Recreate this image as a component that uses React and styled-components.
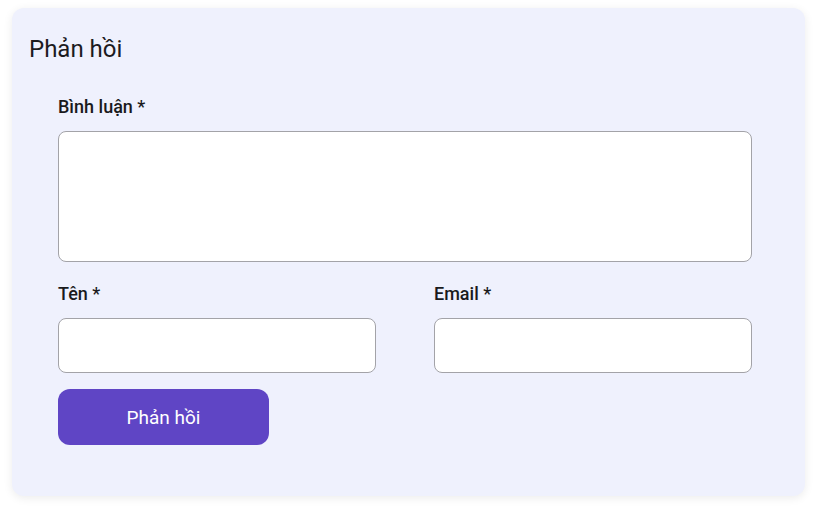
import React from "react";
import styled, { createGlobalStyle } from "styled-components";

const Global = createGlobalStyle`
  html, body { margin: 0; padding: 0; background: #ffffff; }
  body { font-family: Roboto, "Noto Sans", sans-serif; }
  * { box-sizing: border-box; }
`;

const Page = styled.div`
  padding: 8px 12px 16px 12px;
`;

const Card = styled.section`
  width: 793px;
  background: #eff1fd;
  border-radius: 12px;
  box-shadow: 0 2px 10px rgba(0, 0, 0, 0.08);
  padding: 26px 53px 51px 17px;
`;

const Title = styled.h2`
  margin: 0 0 32px 0;
  font-size: 24px;
  font-weight: 400;
  line-height: 30px;
  color: #1c1b1f;
`;

const Form = styled.form`
  margin-left: 29px;
  display: flex;
  flex-direction: column;
`;

const Row = styled.div`
  display: grid;
  grid-template-columns: 1fr 1fr;
  column-gap: 58px;
  margin-top: 21px;
`;

const Field = styled.label`
  display: flex;
  flex-direction: column;
`;

const Label = styled.span`
  font-size: 18px;
  font-weight: 500;
  line-height: 22px;
  color: #1a1a1c;
  margin-bottom: 13px;
`;

const TextArea = styled.textarea`
  height: 131px;
  border: 1px solid #a3a3a8;
  border-radius: 8px;
  background: #ffffff;
  resize: none;
  font: inherit;
`;

const Input = styled.input`
  height: 55px;
  border: 1px solid #a3a3a8;
  border-radius: 8px;
  background: #ffffff;
  font: inherit;
`;

const Button = styled.button`
  margin-top: 16px;
  width: 211px;
  height: 56px;
  border: none;
  border-radius: 12px;
  background: #5f45c5;
  color: #ffffff;
  font-family: Roboto, sans-serif;
  font-size: 19px;
  font-weight: 400;
`;

export default function App() {
  return (
    <Page>
      <Global />
      <Card>
        <Title>Phản hồi</Title>
        <Form onSubmit={(e) => e.preventDefault()}>
          <Field>
            <Label>Bình luận *</Label>
            <TextArea />
          </Field>
          <Row>
            <Field>
              <Label>Tên *</Label>
              <Input type="text" />
            </Field>
            <Field>
              <Label>Email *</Label>
              <Input type="email" />
            </Field>
          </Row>
          <Button type="submit">Phản hồi</Button>
        </Form>
      </Card>
    </Page>
  );
}
